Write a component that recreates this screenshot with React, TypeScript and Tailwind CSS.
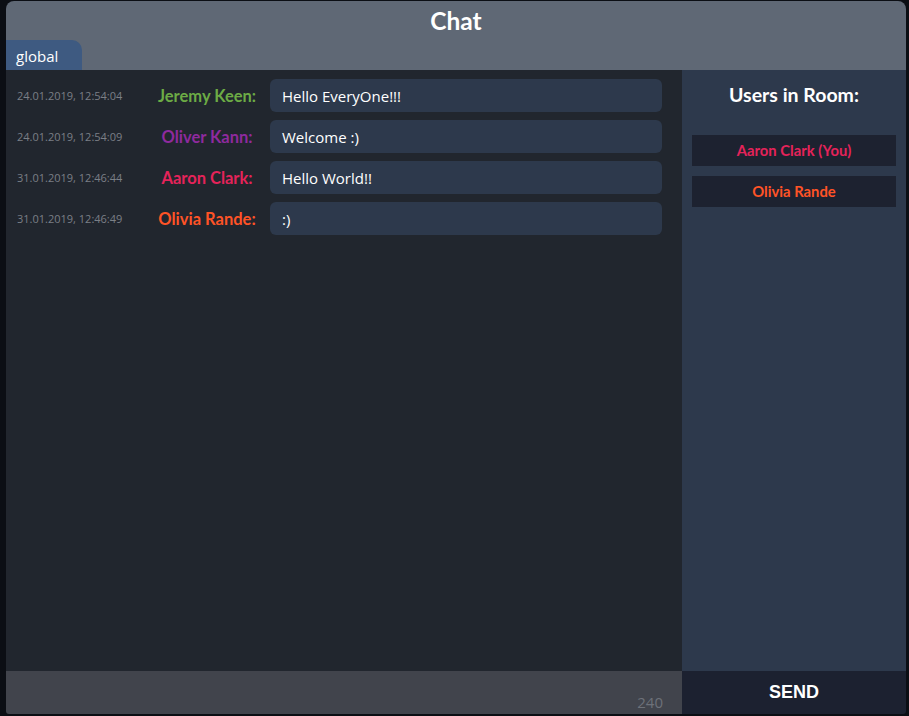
import React from 'react';

const messages = [
  { time: '24.01.2019, 12:54:04', name: 'Jeremy Keen:', color: 'text-[#6cab45]', text: 'Hello EveryOne!!!' },
  { time: '24.01.2019, 12:54:09', name: 'Oliver Kann:', color: 'text-[#8f2a9e]', text: 'Welcome :)' },
  { time: '31.01.2019, 12:46:44', name: 'Aaron Clark:', color: 'text-[#e5235a]', text: 'Hello World!!' },
  { time: '31.01.2019, 12:46:49', name: 'Olivia Rande:', color: 'text-[#ff5326]', text: ':)' },
];

const users = [
  { name: 'Aaron Clark (You)', color: 'text-[#e5235a]' },
  { name: 'Olivia Rande', color: 'text-[#ff5326]' },
];

export default function App() {
  return (
    <div className="h-[716px] w-[909px] bg-[#0b0e14] pl-[6px] pr-[3px] pt-[1px] pb-[2px] font-['Open_Sans',sans-serif]">
      <div className="flex h-full flex-col overflow-hidden rounded-t-[8px] rounded-b-[3px]">
        {/* header */}
        <div className="flex h-[69px] flex-col bg-[#5f6875]">
          <div className="flex h-[40px] items-center justify-center pt-[2px] text-[24.5px] font-bold text-white font-['Lato',sans-serif]">
            Chat
          </div>
          <div className="flex flex-1 items-end">
            <div className="flex h-[32px] w-[76px] items-center rounded-tr-[10px] bg-[#3e5a81] pl-[10px] text-[15px] text-white">
              global
            </div>
          </div>
        </div>

        {/* body */}
        <div className="flex flex-1">
          <div className="flex flex-1 flex-col gap-[8px] bg-[#21262e] pt-[9px] pr-[20px]">
            {messages.map((m) => (
              <div key={m.time} className="flex items-center">
                <div className="w-[141px] pl-[11px] pt-[2px] text-[11px] text-[#7b7f86]">{m.time}</div>
                <div className={`w-[120px] pt-[1px] text-center text-[16.5px] font-bold font-['Lato',sans-serif] ${m.color}`}>
                  {m.name}
                </div>
                <div className="ml-[3px] flex h-[33px] flex-1 items-center rounded-[6px] bg-[#2d394c] pl-[12px] pt-[1px] text-[15px] text-white">
                  {m.text}
                </div>
              </div>
            ))}
          </div>
          <div className="flex w-[224px] flex-col bg-[#2d394c] px-[10px]">
            <div className="flex h-[50px] items-center justify-center text-[19.5px] font-bold text-white font-['Lato',sans-serif]">
              Users in Room:
            </div>
            <div className="mt-[15px] flex flex-col gap-[10px]">
              {users.map((u) => (
                <div
                  key={u.name}
                  className={`flex h-[31px] items-center justify-center bg-[#1d2230] text-[14.8px] font-bold font-['Lato',sans-serif] ${u.color}`}
                >
                  {u.name}
                </div>
              ))}
            </div>
          </div>
        </div>

        {/* footer */}
        <div className="flex h-[43px]">
          <div className="flex flex-1 items-end justify-end bg-[#41444c] pb-[1px] pr-[19px] text-[15px] text-[#6d7179]">
            240
          </div>
          <div className="flex w-[224px] items-center justify-center bg-[#1c2130] text-[18px] font-bold text-white font-['Liberation_Sans',sans-serif]">
            SEND
          </div>
        </div>
      </div>
    </div>
  );
}
